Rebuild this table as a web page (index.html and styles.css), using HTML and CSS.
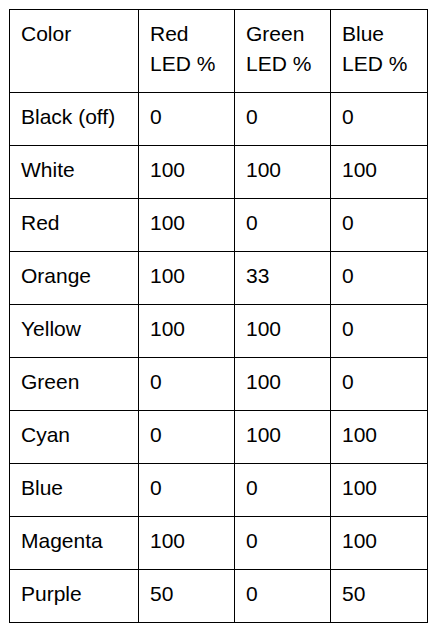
FILE: index.html
```html
<!DOCTYPE html>
<html>
<head>
<meta charset="utf-8">
<link rel="stylesheet" href="styles.css">
</head>
<body>
<table class="led-table">
  <colgroup>
    <col class="c1"><col class="c2"><col class="c3"><col class="c4">
  </colgroup>
  <tr class="head"><td>Color</td><td>Red<br>LED %</td><td>Green<br>LED %</td><td>Blue<br>LED %</td></tr>
  <tr><td>Black (off)</td><td>0</td><td>0</td><td>0</td></tr>
  <tr><td>White</td><td>100</td><td>100</td><td>100</td></tr>
  <tr><td>Red</td><td>100</td><td>0</td><td>0</td></tr>
  <tr><td>Orange</td><td>100</td><td>33</td><td>0</td></tr>
  <tr><td>Yellow</td><td>100</td><td>100</td><td>0</td></tr>
  <tr><td>Green</td><td>0</td><td>100</td><td>0</td></tr>
  <tr><td>Cyan</td><td>0</td><td>100</td><td>100</td></tr>
  <tr><td>Blue</td><td>0</td><td>0</td><td>100</td></tr>
  <tr><td>Magenta</td><td>100</td><td>0</td><td>100</td></tr>
  <tr><td>Purple</td><td>50</td><td>0</td><td>50</td></tr>
</table>
</body>
</html>
```
FILE: styles.css
```css
html, body {
  margin: 0;
  background: #ffffff;
}
body {
  padding: 9px;
}
.led-table {
  border-collapse: collapse;
  table-layout: fixed;
  width: 418px;
  font-family: "Liberation Sans", Arial, sans-serif;
  font-size: 21px;
  line-height: 30px;
  color: #000000;
}
.c1 { width: 129px; }
.c2 { width: 96px; }
.c3 { width: 96px; }
.c4 { width: 97px; }
.led-table td {
  border: 1px solid #000000;
  padding: 9px 11px 13px 11px;
  vertical-align: top;
  text-align: left;
}
```
